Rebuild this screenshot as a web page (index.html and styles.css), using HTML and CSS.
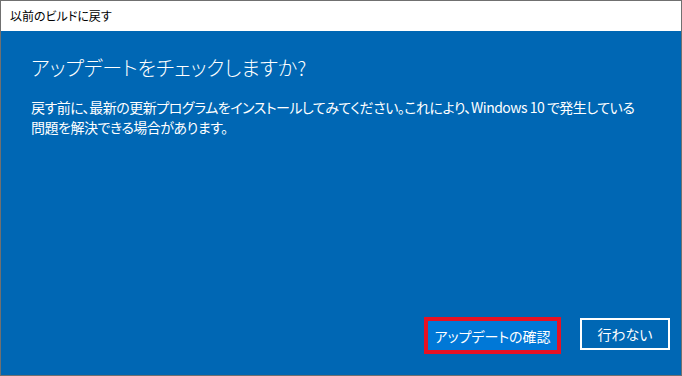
FILE: index.html
```html
<!DOCTYPE html>
<html lang="ja">
<head>
    <meta charset="UTF-8">
    <meta name="viewport" content="width=device-width, initial-scale=1.0">
    <title>以前のビルドに戻す</title>
    <link rel="stylesheet" href="styles.css">
</head>
<body>
    <div class="dialog">
        <div class="title-bar">以前のビルドに戻す</div>
        <div class="dialog-body">
            <h1 class="heading">アップデートをチェックしますか?</h1>
            <p class="message">戻す前に、最新の更新プログラムをインストールしてみてください。これにより、Windows 10 で発生している<br>問題を解決できる場合があります。</p>
            <div class="actions">
                <button type="button" class="btn btn-primary">アップデートの確認</button>
                <button type="button" class="btn btn-outline">行わない</button>
            </div>
        </div>
    </div>
</body>
</html>
```

FILE: styles.css
```css
html, body {
    margin: 0;
    padding: 0;
}
body {
    font-family: "Noto Sans CJK JP", "Noto Sans", sans-serif;
    font-feature-settings: "palt";
}
.dialog {
    width: 682px;
    height: 376px;
    box-sizing: border-box;
    border: 1px solid #707070;
    display: flex;
    flex-direction: column;
    background: #ffffff;
}
.title-bar {
    height: 30px;
    line-height: 30px;
    padding-left: 9px;
    font-size: 12px;
    color: #000000;
    flex-shrink: 0;
}
.dialog-body {
    flex: 1;
    background-color: #0067b4;
    color: #ffffff;
    padding: 21px 11px 21px 30px;
    display: flex;
    flex-direction: column;
}
.heading {
    margin: 0;
    font-size: 20px;
    font-weight: 300;
    line-height: 32px;
}
.message {
    margin: 13px 0 0;
    font-size: 14px;
    letter-spacing: -0.5px;
    line-height: 20px;
}
.actions {
    margin-top: auto;
    display: flex;
    justify-content: flex-end;
    align-items: flex-start;
    gap: 20px;
}
.btn {
    font-family: inherit;
    font-feature-settings: "palt";
    font-size: 14px;
    color: #ffffff;
    cursor: pointer;
    padding: 0;
}
.btn-primary {
    width: 137px;
    height: 37px;
    margin-right: -1px;
    background-color: #0078d7;
    border: 4px solid #e81123;
}
.btn-outline {
    margin-top: 1px;
    width: 90px;
    height: 32px;
    background-color: transparent;
    border: 2px solid #ffffff;
}
```
